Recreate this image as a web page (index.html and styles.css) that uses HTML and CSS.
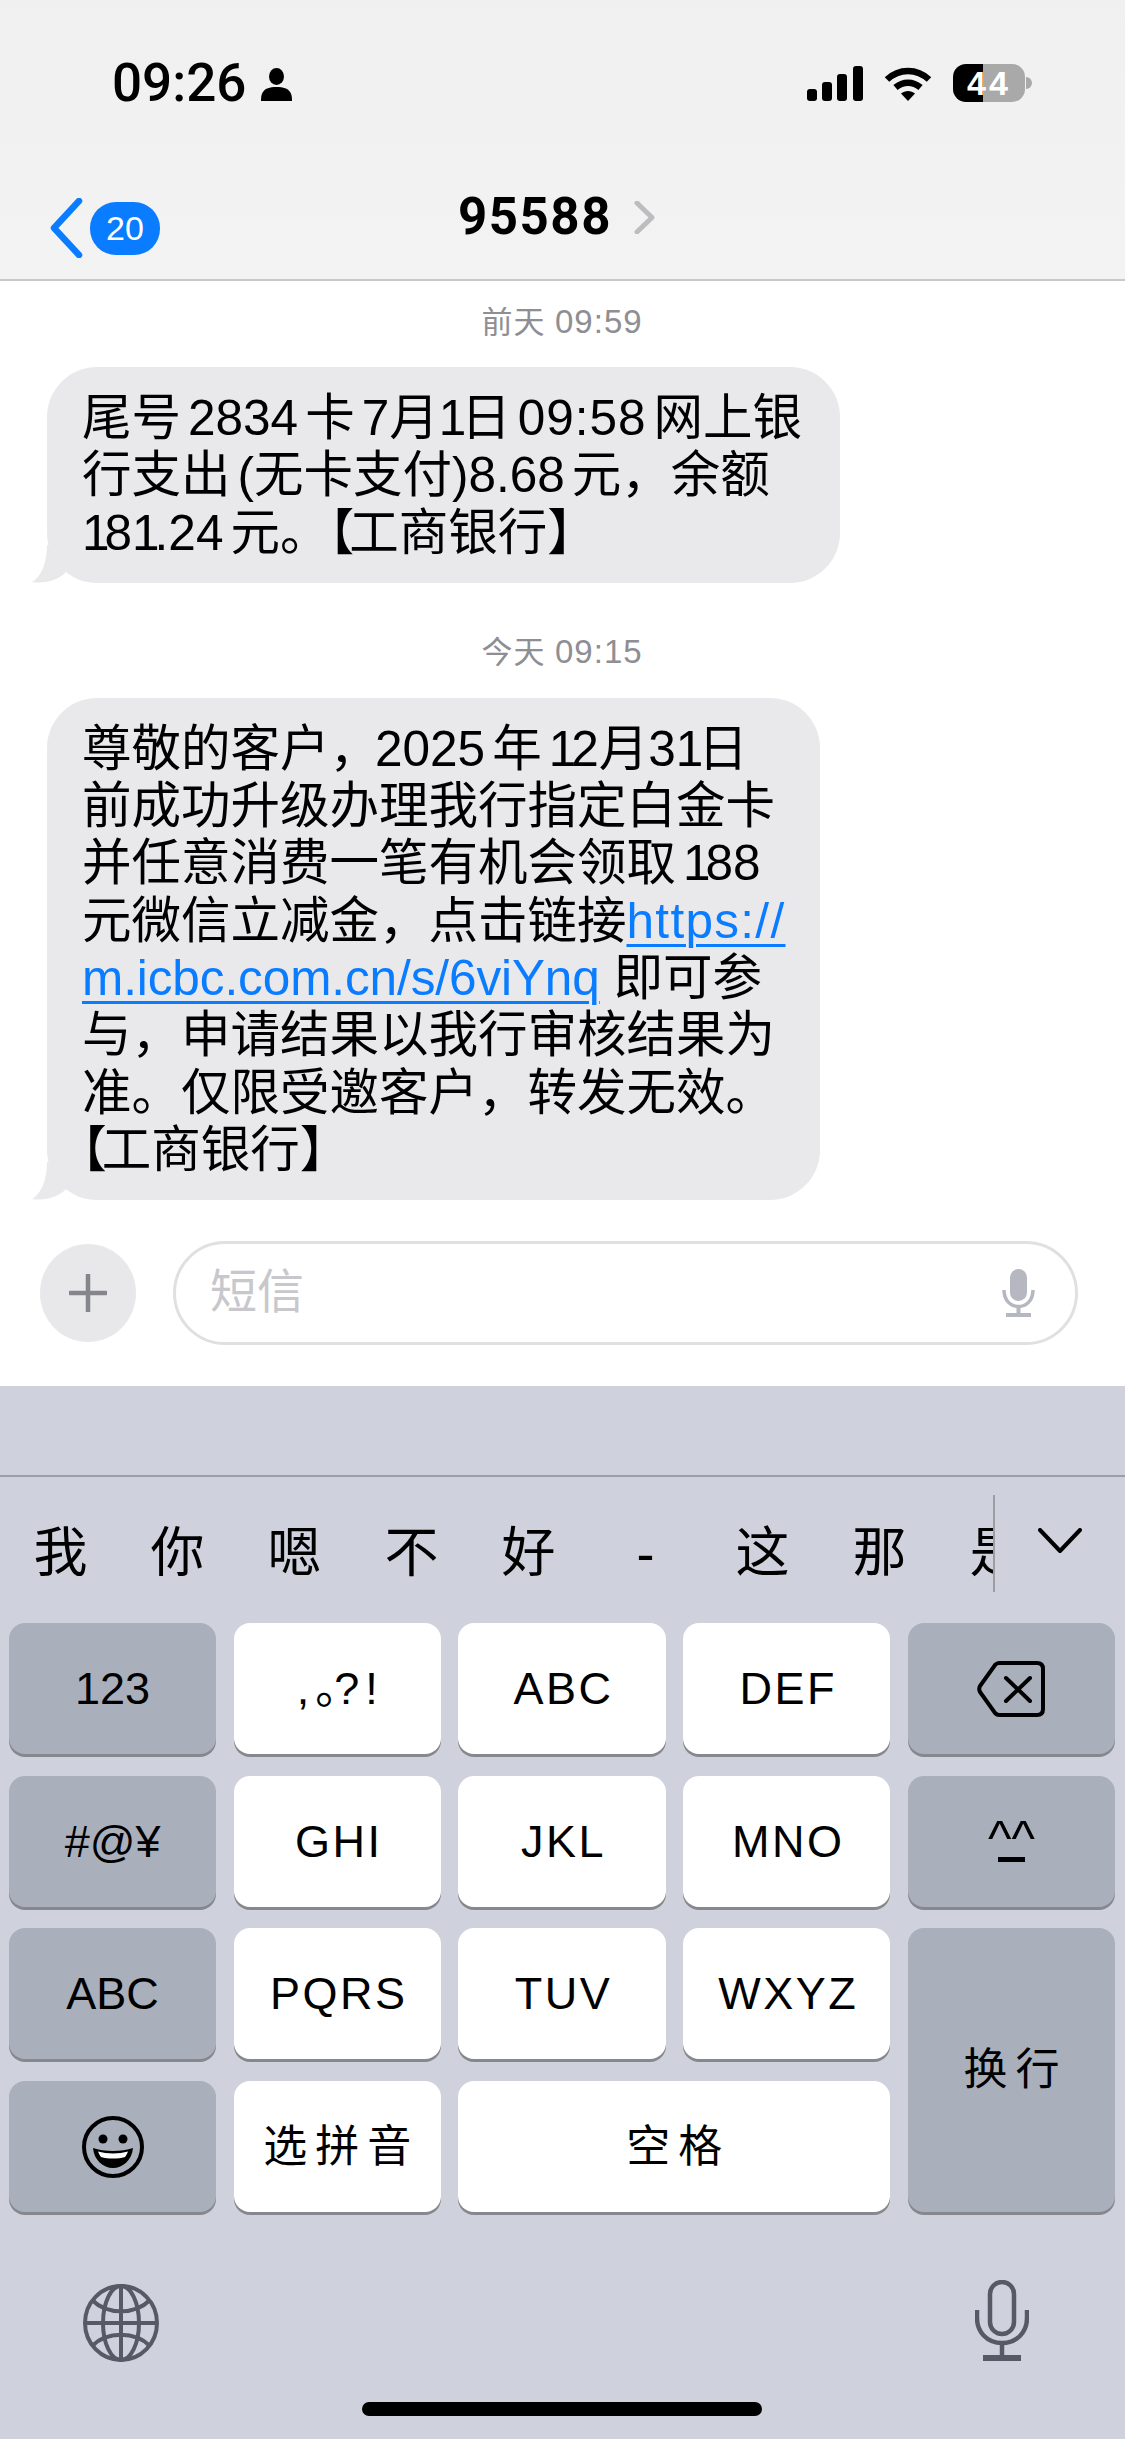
FILE: index.html
```html
<!DOCTYPE html>
<html lang="zh">
<head>
  <meta charset="UTF-8">
  <title>95588</title>
  <link rel="stylesheet" href="styles.css">
</head>
<body>
  <div class="phone">
    <header class="top">
      <div class="status">
        <div class="status-left">
          <span class="clock">09:26</span>
          <svg class="person" viewBox="0 0 31 33" width="31" height="33"><ellipse cx="15.5" cy="8.5" rx="7.5" ry="8.5"/><path d="M0 33C0 26 1 19 15.5 19S31 26 31 33Z"/></svg>
        </div>
        <div class="status-right">
          <svg class="signal" viewBox="0 0 56 35" width="56" height="35"><rect x="0" y="23" width="10" height="12" rx="3"/><rect x="15" y="16" width="10" height="19" rx="3"/><rect x="30" y="8" width="10" height="27" rx="3"/><rect x="46" y="0" width="10" height="35" rx="3"/></svg>
          <svg class="wifi" viewBox="0 0 48 35" width="48" height="35"><path d="M3 13.5C15 2 33 2 45 13.5" fill="none" stroke="#000" stroke-width="6.5"/><path d="M11.5 21.5C19 15 29 15 36.5 21.5" fill="none" stroke="#000" stroke-width="6.5"/><path d="M17 27.5C21 24 27 24 31 27.5L24 35Z"/></svg>
          <div class="battery"><span class="battery-num">44</span></div>
          <div class="battery-nub"></div>
        </div>
      </div>
      <div class="nav">
        <div class="nav-back">
          <svg class="back-arrow" viewBox="0 0 34 60" width="34" height="60"><path d="M30 3L5 30L30 57" fill="none" stroke="#0a7cff" stroke-width="6.5" stroke-linecap="round" stroke-linejoin="round"/></svg>
          <span class="badge">20</span>
        </div>
        <div class="nav-title">
          <span class="title-num">95588</span>
          <svg viewBox="0 0 21 33" width="21" height="33"><path d="M3 2L18 16.5L3 31" fill="none" stroke="#bdbdc0" stroke-width="5" stroke-linecap="round" stroke-linejoin="round"/></svg>
        </div>
        <div></div>
      </div>
    </header>

    <main class="thread">
      <div class="stamp stamp-first">前天 <span class="stamp-time">09:59</span></div>
      <div class="bubble bubble-short">
        尾号<span class="gap"></span>2834<span class="gap"></span>卡<span class="gap"></span>7月<span class="one">1</span>日<span class="gap"></span><span class="wide">09:58</span><span class="gap"></span>网上银<br>
        行支出<span class="gap"></span>(无卡支付)8.68<span class="gap"></span>元，余额<br>
        <span class="one">1</span>8<span class="one">1</span>.24<span class="gap"></span>元。<span class="bracket">【</span>工商银行】
        <svg class="tail" viewBox="0 0 50 40" width="50" height="40"><path d="M15 2C15 20 9 34 0 39C14 41 27 37 35 28L40 5Z"/></svg>
      </div>
      <div class="stamp">今天 <span class="stamp-time">09:15</span></div>
      <div class="bubble bubble-long">
        尊敬的客户<span class="comma">，</span>2025<span class="gap"></span>年<span class="gap"></span><span class="one">1</span>2月3<span class="one">1</span>日<br>
        前成功升级办理我行指定白金卡<br>
        并任意消费一笔有机会领取<span class="gap"></span><span class="one">1</span>88<br>
        元微信立减金，点击链接<a class="link link-head" href="#">https://</a><br>
        <a class="link link-tail" href="#">m.icbc.com.cn/s/6viYnq</a> 即可参<br>
        与，申请结果以我行审核结果为<br>
        准。仅限受邀客户，转发无效。<br>
        <span class="bracket">【</span>工商银行】
        <svg class="tail" viewBox="0 0 50 40" width="50" height="40"><path d="M15 2C15 20 9 34 0 39C14 41 27 37 35 28L40 5Z"/></svg>
      </div>
    </main>

    <div class="composer">
      <div class="plus">
        <svg viewBox="0 0 38 38" width="38" height="38"><path d="M19 1V37M1 19H37" stroke="#85868c" stroke-width="4.5" stroke-linecap="round"/></svg>
      </div>
      <div class="input">
        <span class="placeholder">短信</span>
        <svg viewBox="0 0 33 48" width="33" height="48"><rect x="8" y="0" width="17" height="32" rx="8.5" fill="#b5b8c1"/><path d="M2 21C2 43 31 43 31 21" fill="none" stroke="#b5b8c1" stroke-width="3.5"/><path d="M16.5 36V45M4 46H29" stroke="#b5b8c1" stroke-width="4"/></svg>
      </div>
    </div>

    <section class="keyboard">
      <div class="kb-strip"></div>
      <div class="candidates">
        <div class="cand-list">
          <span>我</span><span>你</span><span>嗯</span><span>不</span><span>好</span><span>-</span><span>这</span><span>那</span><span>是</span>
        </div>
        <svg class="cand-more" viewBox="0 0 44 26" width="44" height="26"><path d="M2 2L22 23L42 2" fill="none" stroke="#000" stroke-width="4" stroke-linecap="round" stroke-linejoin="round"/></svg>
      </div>
      <div class="keys">
        <div class="key key-dark">123</div>
        <div class="key key-punct">,<span class="dot">。</span>?!</div>
        <div class="key key-letters">ABC</div>
        <div class="key key-letters">DEF</div>
        <div class="key key-dark">
          <svg viewBox="0 0 68 56" width="68" height="56"><path d="M22 2H60C64 2 66 4 66 8V48C66 52 64 54 60 54H22C20 54 19 53 18 52L3 31C2 29 2 27 3 25L18 4C19 3 20 2 22 2Z" fill="none" stroke="#000" stroke-width="4"/><path d="M29 17L53 40M53 17L29 40" stroke="#000" stroke-width="4" stroke-linecap="round"/></svg>
        </div>
        <div class="key key-dark">#@¥</div>
        <div class="key key-letters">GHI</div>
        <div class="key key-letters">JKL</div>
        <div class="key key-letters">MNO</div>
        <div class="key key-dark key-face"><span class="face-eyes">^^</span><i class="face-mouth"></i></div>
        <div class="key key-dark">ABC</div>
        <div class="key key-letters">PQRS</div>
        <div class="key key-letters">TUV</div>
        <div class="key key-letters">WXYZ</div>
        <div class="key key-dark key-cn key-return">换行</div>
        <div class="key key-dark">
          <svg viewBox="0 0 62 62" width="62" height="62"><ellipse cx="31" cy="31" rx="29" ry="29" fill="none" stroke="#000" stroke-width="4"/><circle cx="21" cy="23" r="4.5"/><circle cx="41" cy="23" r="4.5"/><path d="M11 32C22 36 40 36 51 32C50 44 41 52 31 52S12 44 11 32Z"/><path d="M16 35.5C25 38 37 38 46 35.5C45 38 44 40 43 41C36 43 26 43 19 41C18 40 17 38 16 35.5Z" fill="#fff"/></svg>
        </div>
        <div class="key key-cn">选拼音</div>
        <div class="key key-cn key-space">空格</div>
      </div>
      <div class="kb-bottom">
        <svg class="globe" viewBox="0 0 76 78" width="76" height="78" fill="none" stroke="#565a66" stroke-width="4"><ellipse cx="38" cy="39" rx="36" ry="37"/><ellipse cx="38" cy="39" rx="18" ry="37"/><path d="M38 2V76M2 39H74M9 16C24 31 52 31 67 16M9 62C24 47 52 47 67 62"/></svg>
        <svg viewBox="0 0 54 82" width="54" height="82" fill="none" stroke="#565a66" stroke-width="4.5"><rect x="15" y="2" width="24" height="52" rx="12"/><path d="M2 30V38C2 52 12 63 27 63S52 52 52 38V30"/><path d="M27 63V77"/><path d="M8 78H46" stroke-width="6"/></svg>
      </div>
      <div class="home-bar"></div>
    </section>
  </div>
</body>
</html>
```

FILE: styles.css
```css
* {
  box-sizing: border-box;
}
body {
  margin: 0;
  background: #fff;
  color: #000;
  font-family: "Liberation Sans", "Noto Sans CJK SC", sans-serif;
}
.phone {
  width: 1125px;
  height: 2439px;
  overflow: hidden;
  display: flex;
  flex-direction: column;
}

/* top bar */
.top {
  height: 281px;
  background: linear-gradient(180deg, #f0f0f1, #f3f3f4);
  border-bottom: 2px solid #c9c9cb;
}
.status {
  height: 166px;
  padding: 0 93px 0 112px;
  display: flex;
  align-items: center;
  justify-content: space-between;
}
.status-left {
  display: flex;
  align-items: center;
  gap: 15px;
}
.clock {
  font-family: "Roboto", "Liberation Sans", sans-serif;
  font-size: 53px;
  font-weight: 500;
  line-height: 50px;
}
.person {
  margin-top: 2px;
}
.status-right {
  display: flex;
  align-items: center;
}
.signal {
  margin-right: 21px;
}
.wifi {
  margin-right: 21px;
}
.battery {
  width: 72px;
  height: 38px;
  border-radius: 13px;
  background: linear-gradient(90deg, #000 42%, #a9a9a9 42%);
  display: flex;
  align-items: center;
  justify-content: center;
}
.battery-num {
  color: #fff;
  font-size: 34px;
  font-weight: 700;
  line-height: 38px;
  letter-spacing: 3px;
}
.battery-nub {
  width: 6px;
  height: 12px;
  margin-left: 1px;
  border-radius: 0 6px 6px 0;
  background: #a9a9a9;
}
.nav {
  display: grid;
  grid-template-columns: 1fr auto 1fr;
  padding: 0 61px 0 49px;
  align-items: start;
}
.nav-back {
  display: flex;
  align-items: center;
  margin-top: 32px;
  gap: 7px;
}
.back-arrow {
  flex: none;
}
.badge {
  width: 70px;
  height: 53px;
  border-radius: 26px;
  background: #0a7cff;
  color: #fff;
  font-size: 34px;
  line-height: 53px;
  text-align: center;
}
.nav-title {
  display: flex;
  align-items: center;
  gap: 22px;
  margin-top: 33px;
}
.title-num {
  font-family: "Roboto", "Liberation Sans", sans-serif;
  font-size: 51px;
  font-weight: 700;
  line-height: 36px;
  letter-spacing: 1.5px;
}

/* messages */
.thread {
  height: 917px;
  padding-left: 47px;
}
.stamp {
  width: 1030px;
  height: 36px;
  margin: 51px 0 28px;
  color: #8e8e93;
  font-size: 31px;
  line-height: 36px;
  text-align: center;
  letter-spacing: 1px;
}
.stamp-first {
  margin-top: 23px;
  margin-bottom: 27px;
}
.stamp-time {
  font-size: 33px;
}
.bubble {
  position: relative;
  padding: 22px 0 22px 35px;
  border-radius: 50px;
  background: #e9e9eb;
  font-size: 49.5px;
  line-height: 57.3px;
  white-space: nowrap;
  text-spacing-trim: space-all;
}
.bubble-short {
  width: 793px;
}
.bubble-long {
  width: 773px;
}
.gap {
  display: inline-block;
  width: 7px;
}
.one {
  letter-spacing: -5px;
}
.wide {
  letter-spacing: 1px;
}
.comma {
  letter-spacing: -4px;
}
/* 半宽括号，和原图的窄括号接近 */
.bracket {
  font-feature-settings: "halt";
  letter-spacing: -5px;
}
.tail {
  position: absolute;
  left: -15px;
  bottom: 0;
  fill: #e9e9eb;
}
.link {
  color: #0a7cff;
  text-decoration: underline;
  text-decoration-thickness: 3px;
  text-underline-offset: 6px;
}
.link-head {
  letter-spacing: 1.3px;
}
.link-tail {
  letter-spacing: -0.1px;
}

/* input row */
.composer {
  height: 188px;
  padding: 43px 47px 41px 40px;
  display: flex;
  align-items: center;
  gap: 37px;
}
.plus {
  flex: none;
  width: 96px;
  height: 98px;
  border-radius: 50%;
  background: #e8e8ea;
  display: flex;
  align-items: center;
  justify-content: center;
}
.input {
  flex: 1;
  height: 104px;
  padding: 0 40px 0 34px;
  border: 3px solid #e0e0e2;
  border-radius: 52px;
  display: flex;
  align-items: center;
  justify-content: space-between;
}
.placeholder {
  color: #c7c7cc;
  font-size: 47px;
  line-height: 60px;
  margin-bottom: 2px;
}

/* keyboard */
.keyboard {
  flex: 1;
  background: #cfd2dc;
  position: relative;
}
.kb-strip {
  height: 91px;
  border-bottom: 2px solid #9d9ea3;
}
.candidates {
  height: 146px;
  display: flex;
  align-items: flex-start;
}
.cand-list {
  width: 995px;
  height: 97px;
  margin-top: 18px;
  padding: 18px 0 0 2px;
  border-right: 2px solid #9d9ea3;
  overflow: hidden;
  display: flex;
  align-items: center;
}
.cand-list span {
  flex: none;
  width: 117px;
  text-align: center;
  font-size: 54px;
  line-height: 80px;
}
.cand-more {
  margin: 51px 0 0 43px;
}
.keys {
  display: grid;
  grid-template-columns: repeat(5, 1fr);
  grid-auto-rows: 131px;
  gap: 21.7px 17.5px;
  padding: 0 10px 0 9px;
}
.key {
  background: #fff;
  border-radius: 16px;
  box-shadow: 0 3px 0 #87888d;
  display: flex;
  align-items: center;
  justify-content: center;
  font-size: 45px;
  line-height: 1;
}
.key-letters {
  letter-spacing: 2.5px;
  padding-left: 3px;
}
.key-dark {
  background: #a9afbb;
}
.key-punct {
  letter-spacing: 6px;
  padding-left: 6px;
}
.dot {
  letter-spacing: -24px;
  margin-right: -2px;
}
.key-cn {
  font-size: 44px;
  letter-spacing: 8px;
  padding-left: 8px;
}
.key-return {
  grid-column: 5;
  grid-row: 3 / span 2;
}
.key-space {
  grid-column: span 2;
}
.key-face {
  flex-direction: column;
}
.face-eyes {
  font-size: 50px;
  line-height: 26px;
  margin-top: 4px;
}
.face-mouth {
  width: 27px;
  height: 5px;
  margin-top: 6px;
  background: #000;
}
.kb-bottom {
  display: flex;
  justify-content: space-between;
  align-items: flex-start;
  margin-top: 68px;
  padding: 0 96px 0 83px;
}
.globe {
  margin-top: 4px;
}
.home-bar {
  position: absolute;
  left: 362px;
  bottom: 23px;
  width: 400px;
  height: 14px;
  border-radius: 7px;
  background: #000;
}
```
